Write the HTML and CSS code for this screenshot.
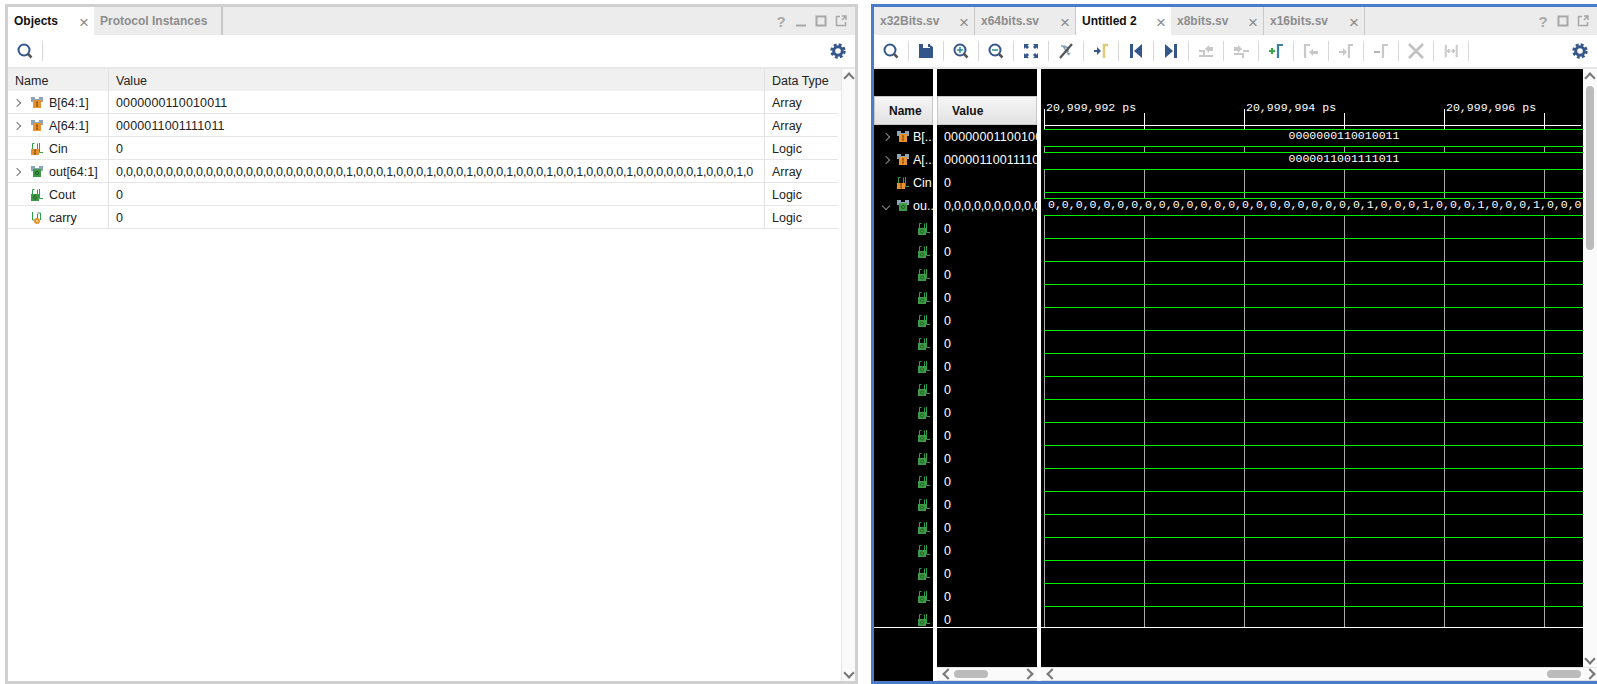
FILE: index.html
```html
<!DOCTYPE html>
<html>
<head>
<meta http-equiv="Content-Type" content="text/html; charset=utf-8"/>
<title>Simulation</title>
<link rel="stylesheet" href="styles.css">
</head>
<body>

<svg class="defs" width="0" height="0">
  <symbol id="arr-in" viewBox="0 0 14 12">
    <path d="M1 0h4v2h4V0h4v5h-2v5H3V5H1z" fill="#8ea5b8"/>
    <rect x="3" y="3" width="8" height="8" fill="#e8912d"/>
    <path d="M6 5h2M7 5v4M6 9h2" stroke="#7a4a14" fill="none"/>
  </symbol>
  <symbol id="arr-out" viewBox="0 0 14 12">
    <path d="M1 0h4v2h4V0h4v5h-2v5H3V5H1z" fill="#8ea5b8"/>
    <rect x="3" y="3" width="8" height="8" fill="#3f9a48"/>
    <circle cx="7" cy="7" r="1.6" fill="none" stroke="#1f5e25"/>
  </symbol>
  <symbol id="sig-in" viewBox="0 0 14 12">
    <path d="M2.500 6V.5H4.500M7.500.5V6M9.500 0v9.500H13" stroke="#2fa04a" fill="none"/>
    <rect x="1" y="6" width="8" height="6" fill="#e8912d"/>
    <path d="M4 7h2M5 7v4M4 11h2" stroke="#7a4a14" fill="none"/>
  </symbol>
  <symbol id="sig-out" viewBox="0 0 14 12">
    <path d="M2.500 6V.5H4.500M7.500.5V6M9.500 0v9.500H13" stroke="#2fa04a" fill="none"/>
    <rect x="1" y="5" width="8" height="7" fill="#3f9a48"/>
    <circle cx="5" cy="8.500" r="1.600" fill="none" stroke="#1f5e25"/>
  </symbol>
  <symbol id="sig-int" viewBox="0 0 14 12">
    <path d="M2.500 0v8H5M7.500 8V2M7.500 1h3v7" stroke="#2fa04a" fill="none"/>
    <circle cx="7" cy="9" r="3" fill="#e8912d"/>
    <circle cx="7" cy="9" r="1" fill="#f8e0b0"/>
  </symbol>
  <symbol id="search" viewBox="0 0 20 20">
    <circle cx="9" cy="9" r="5.500" fill="none" stroke="#34568b" stroke-width="2"/>
    <path d="M13 13l3.500 3.500" stroke="#555" stroke-width="2.500"/>
  </symbol>
  <symbol id="gear" viewBox="0 0 20 20">
    <circle cx="10" cy="10" r="6.500" fill="none" stroke="#34568b" stroke-width="2.400" stroke-dasharray="2.900 2.200"/>
    <circle cx="10" cy="10" r="4.300" fill="none" stroke="#34568b" stroke-width="3"/>
  </symbol>
</svg>

<div class="page">

  <section class="panel panel-left">
    <div class="tabbar">
      <div class="tab tab-active tab-objects"><span>Objects</span><i class="x">&#215;</i></div>
      <div class="tab tab-protocol"><span>Protocol Instances</span></div>
      <div class="tabbar-fill"></div>
      <div class="win-btns">
        <span class="win-q">?</span>
        <svg width="12" height="12"><path d="M1 10.500h10" stroke="#a8a8a8" stroke-width="2"/></svg>
        <svg width="12" height="12"><rect x="1.500" y="1.500" width="9" height="9" fill="none" stroke="#a8a8a8" stroke-width="2"/></svg>
        <svg width="12" height="12"><path d="M5 1.500H1.500v9h9V7M7 1h4v4M11 1L7 5" fill="none" stroke="#a8a8a8" stroke-width="1.500"/></svg>
      </div>
    </div>
    <div class="toolbar">
      <div class="tool"><svg width="20" height="20"><use href="#search"/></svg></div>
      <div class="toolbar-fill"></div>
      <div class="tool-gear"><svg width="20" height="20"><use href="#gear"/></svg></div>
    </div>
    <div class="objects">
      <div class="objects-table">
        <div class="orow ohead"><div class="c-name">Name</div><div class="c-value">Value</div><div class="c-type">Data Type</div></div>
        <div class="orow">
          <div class="c-name"><i class="chev"></i><svg class="sig" width="14" height="12"><use href="#arr-in"/></svg>B[64:1]</div>
          <div class="c-value digits">0000000110010011</div><div class="c-type">Array</div>
        </div>
        <div class="orow">
          <div class="c-name"><i class="chev"></i><svg class="sig" width="14" height="12"><use href="#arr-in"/></svg>A[64:1]</div>
          <div class="c-value digits">0000011001111011</div><div class="c-type">Array</div>
        </div>
        <div class="orow">
          <div class="c-name"><i class="chev chev-none"></i><svg class="sig" width="14" height="12"><use href="#sig-in"/></svg>Cin</div>
          <div class="c-value">0</div><div class="c-type">Logic</div>
        </div>
        <div class="orow">
          <div class="c-name"><i class="chev"></i><svg class="sig" width="14" height="12"><use href="#arr-out"/></svg>out[64:1]</div>
          <div class="c-value bits">0,0,0,0,0,0,0,0,0,0,0,0,0,0,0,0,0,0,0,0,0,0,0,1,0,0,0,1,0,0,0,1,0,0,0,1,0,0,0,1,0,0,0,1,0,0,1,0,0,0,0,1,0,0,0,0,0,0,1,0,0,0,1,0</div><div class="c-type">Array</div>
        </div>
        <div class="orow">
          <div class="c-name"><i class="chev chev-none"></i><svg class="sig" width="14" height="12"><use href="#sig-out"/></svg>Cout</div>
          <div class="c-value">0</div><div class="c-type">Logic</div>
        </div>
        <div class="orow">
          <div class="c-name"><i class="chev chev-none"></i><svg class="sig" width="14" height="12"><use href="#sig-int"/></svg>carry</div>
          <div class="c-value">0</div><div class="c-type">Logic</div>
        </div>
      </div>
      <div class="vscroll vscroll-left">
        <i class="arrow arrow-up"></i>
        <i class="arrow arrow-down"></i>
      </div>
    </div>
  </section>

  <section class="panel panel-right">
    <div class="tabbar">
      <div class="tab tab-file w100"><span>x32Bits.sv</span><i class="x">&#215;</i></div>
      <div class="tab tab-file w100"><span>x64bits.sv</span><i class="x">&#215;</i></div>
      <div class="tab tab-active w95"><span>Untitled 2</span><i class="x">&#215;</i></div>
      <div class="tab tab-file w93"><span>x8bits.sv</span><i class="x">&#215;</i></div>
      <div class="tab tab-file w100"><span>x16bits.sv</span><i class="x">&#215;</i></div>
      <div class="tabbar-fill"></div>
      <div class="win-btns">
        <span class="win-q">?</span>
        <svg width="12" height="12"><rect x="1.500" y="1.500" width="9" height="9" fill="none" stroke="#a8a8a8" stroke-width="2"/></svg>
        <svg width="12" height="12"><path d="M5 1.500H1.500v9h9V7M7 1h4v4M11 1L7 5" fill="none" stroke="#a8a8a8" stroke-width="1.500"/></svg>
      </div>
    </div>
    <div class="toolbar toolbar-wave">
      <div class="tool"><svg width="20" height="20"><use href="#search"/></svg></div>
      <div class="tool"><svg width="20" height="20"><path d="M3 3h11v3h-2V3H7v4h7V4l3 2v11H3z" fill="#34568b"/></svg></div>
      <div class="tool"><svg width="20" height="20"><use href="#search"/><path d="M6 9h6M9 6v6" stroke="#2a8a96" stroke-width="1.500"/></svg></div>
      <div class="tool"><svg width="20" height="20"><use href="#search"/><path d="M6 9h6" stroke="#2a8a96" stroke-width="1.500"/></svg></div>
      <div class="tool"><svg width="20" height="20"><path d="M3 3h5L6.500 4.500 8 6 6 8 4.500 6.500 3 8zM17 3v5l-1.500-1.500L14 8l-2-2 1.500-1.500L12 3zM3 17v-5l1.500 1.500L6 12l2 2-1.500 1.500L8 17zM17 17h-5l1.500-1.500L12 14l2-2 1.500 1.500L17 12z" fill="#34568b"/></svg></div>
      <div class="tool"><svg width="20" height="20"><path d="M5 5h2l6 9M8 5l4 2v4M12 14l2-2" fill="none" stroke="#7f9bb5" stroke-width="1.500"/><path d="M4 17L16 3" stroke="#555" stroke-width="2.200"/></svg></div>
      <div class="tool"><svg width="20" height="20"><path d="M3 9h3V6l4 4-4 4v-3H3z" fill="#34568b"/><path d="M13 17V4h4" fill="none" stroke="#e3c878" stroke-width="2.600"/></svg></div>
      <div class="tool"><svg width="20" height="20"><path d="M4 3h3v14H4zM16 3v14L8 10z" fill="#34568b"/></svg></div>
      <div class="tool"><svg width="20" height="20"><path d="M16 3h-3v14h3zM4 3v14l8-7z" fill="#34568b"/></svg></div>
      <div class="tool"><svg width="20" height="20"><path d="M3 10h5v5h9M3 15h5" fill="none" stroke="#c8c8c8" stroke-width="2"/><path d="M9 8l4-4v2h4v4h-4v2z" fill="#c8c8c8"/></svg></div>
      <div class="tool"><svg width="20" height="20"><path d="M3 13h9v4M12 10h6" fill="none" stroke="#c8c8c8" stroke-width="2"/><path d="M11 8L7 4v2H3v4h4v2z" fill="#c8c8c8"/></svg></div>
      <div class="tool"><svg width="20" height="20"><path d="M3 10h6M6 7v6" stroke="#35a845" stroke-width="2.200"/><path d="M12 17V4h5" fill="none" stroke="#3b7fae" stroke-width="2.200"/></svg></div>
      <div class="tool"><svg width="20" height="20"><path d="M4 17V4h5" fill="none" stroke="#c8c8c8" stroke-width="2.200"/><path d="M8 11l4-3v2h5v3h-5v2z" fill="#c8c8c8"/></svg></div>
      <div class="tool"><svg width="20" height="20"><path d="M3 10h4V7l4 4-4 4v-3H3z" fill="#c8c8c8"/><path d="M13 17V4h4" fill="none" stroke="#c8c8c8" stroke-width="2.200"/></svg></div>
      <div class="tool"><svg width="20" height="20"><path d="M3 11h6" stroke="#b4b4b4" stroke-width="2"/><path d="M12 17V4h5" fill="none" stroke="#c8c8c8" stroke-width="2.200"/></svg></div>
      <div class="tool"><svg width="20" height="20"><path d="M3 3l14 14M17 3L3 17" stroke="#c0c0c0" stroke-width="2.600"/></svg></div>
      <div class="tool"><svg width="20" height="20"><path d="M4 4v12h1.500V4zM15 4v12h1.500V4z" fill="#d4d4d4" stroke="#c8c8c8" stroke-width=".6"/><path d="M6 10h8M6 10l2-2v4zM14 10l-2-2v4z" fill="#c4c4c4" stroke="#c4c4c4"/></svg></div>
      <div class="toolbar-fill"></div>
      <div class="tool-gear"><svg width="20" height="20"><use href="#gear"/></svg></div>
    </div>

    <div class="sim">
      <div class="sim-col col-names">
        <div class="sim-head">Name</div>
        <div class="sim-rows">
          <div class="srow"><i class="chev chev-dark"></i><svg class="sig" width="14" height="12"><use href="#arr-in"/></svg><span>B[...]</span></div>
          <div class="srow"><i class="chev chev-dark"></i><svg class="sig" width="14" height="12"><use href="#arr-in"/></svg><span>A[...]</span></div>
          <div class="srow"><i class="chev chev-none"></i><svg class="sig" width="14" height="12"><use href="#sig-in"/></svg><span>Cin</span></div>
          <div class="srow"><i class="chev chev-dark chev-open"></i><svg class="sig" width="14" height="12"><use href="#arr-out"/></svg><span>ou...</span></div>
          <div class="srow srow-bit"><svg class="sig" width="14" height="12"><use href="#sig-out"/></svg></div>
          <div class="srow srow-bit"><svg class="sig" width="14" height="12"><use href="#sig-out"/></svg></div>
          <div class="srow srow-bit"><svg class="sig" width="14" height="12"><use href="#sig-out"/></svg></div>
          <div class="srow srow-bit"><svg class="sig" width="14" height="12"><use href="#sig-out"/></svg></div>
          <div class="srow srow-bit"><svg class="sig" width="14" height="12"><use href="#sig-out"/></svg></div>
          <div class="srow srow-bit"><svg class="sig" width="14" height="12"><use href="#sig-out"/></svg></div>
          <div class="srow srow-bit"><svg class="sig" width="14" height="12"><use href="#sig-out"/></svg></div>
          <div class="srow srow-bit"><svg class="sig" width="14" height="12"><use href="#sig-out"/></svg></div>
          <div class="srow srow-bit"><svg class="sig" width="14" height="12"><use href="#sig-out"/></svg></div>
          <div class="srow srow-bit"><svg class="sig" width="14" height="12"><use href="#sig-out"/></svg></div>
          <div class="srow srow-bit"><svg class="sig" width="14" height="12"><use href="#sig-out"/></svg></div>
          <div class="srow srow-bit"><svg class="sig" width="14" height="12"><use href="#sig-out"/></svg></div>
          <div class="srow srow-bit"><svg class="sig" width="14" height="12"><use href="#sig-out"/></svg></div>
          <div class="srow srow-bit"><svg class="sig" width="14" height="12"><use href="#sig-out"/></svg></div>
          <div class="srow srow-bit"><svg class="sig" width="14" height="12"><use href="#sig-out"/></svg></div>
          <div class="srow srow-bit"><svg class="sig" width="14" height="12"><use href="#sig-out"/></svg></div>
          <div class="srow srow-bit"><svg class="sig" width="14" height="12"><use href="#sig-out"/></svg></div>
          <div class="srow srow-bit"><svg class="sig" width="14" height="12"><use href="#sig-out"/></svg></div>
        </div>
      </div>

      <div class="sim-col col-values">
        <div class="sim-head">Value</div>
        <div class="sim-rows">
          <div class="srow digits">0000000110010011</div>
          <div class="srow digits">0000011001111011</div>
          <div class="srow">0</div>
          <div class="srow bits">0,0,0,0,0,0,0,0,0,0,0,0,0,0,0,0,0,0,0,0,0,0,0,1,0,0,0,1,0,0,0,1,0,0,0,1,0,0,0,1,0,0,0,1,0,0,1,0,0,0,0,1,0,0,0,0,0,0,1,0,0,0,1,0</div>
          <div class="srow">0</div><div class="srow">0</div><div class="srow">0</div><div class="srow">0</div><div class="srow">0</div><div class="srow">0</div>
          <div class="srow">0</div><div class="srow">0</div><div class="srow">0</div><div class="srow">0</div><div class="srow">0</div><div class="srow">0</div>
          <div class="srow">0</div><div class="srow">0</div><div class="srow">0</div><div class="srow">0</div><div class="srow">0</div><div class="srow">0</div>
        </div>
        <div class="hscroll">
          <i class="arrow arrow-left"></i>
          <b class="thumb"></b>
          <i class="arrow arrow-right"></i>
        </div>
      </div>

      <div class="sim-col col-wave">
        <div class="wave-top">
          <div class="wave-main">
            <div class="ruler">
              <div class="tick major"><span>20,999,992 ps</span></div>
              <div class="tick"></div>
              <div class="tick major"><span>20,999,994 ps</span></div>
              <div class="tick"></div>
              <div class="tick major"><span>20,999,996 ps</span></div>
              <div class="tick"></div>
            </div>
            <div class="wave-rows">
              <div class="wrow"><div class="bus bus-center">0000000110010011</div></div>
              <div class="wrow"><div class="bus bus-center">0000011001111011</div></div>
              <div class="wrow"><div class="low"></div></div>
              <div class="wrow"><div class="bus">0,0,0,0,0,0,0,0,0,0,0,0,0,0,0,0,0,0,0,0,0,0,0,1,0,0,0,1,0,0,0,1,0,0,0,1,0,0,0,1,0,0,0,1,0,0,1,0,0,0,0,1,0,0,0,0,0,0,1,0,0,0,1,0</div></div>
              <div class="wrow"><div class="low"></div></div><div class="wrow"><div class="low"></div></div><div class="wrow"><div class="low"></div></div>
              <div class="wrow"><div class="low"></div></div><div class="wrow"><div class="low"></div></div><div class="wrow"><div class="low"></div></div>
              <div class="wrow"><div class="low"></div></div><div class="wrow"><div class="low"></div></div><div class="wrow"><div class="low"></div></div>
              <div class="wrow"><div class="low"></div></div><div class="wrow"><div class="low"></div></div><div class="wrow"><div class="low"></div></div>
              <div class="wrow"><div class="low"></div></div><div class="wrow"><div class="low"></div></div><div class="wrow"><div class="low"></div></div>
              <div class="wrow"><div class="low"></div></div><div class="wrow"><div class="low"></div></div><div class="wrow"><div class="low"></div></div>
            </div>
          </div>
          <div class="vscroll vscroll-right">
            <i class="arrow arrow-up"></i>
            <b class="thumb-v"></b>
            <i class="arrow arrow-down"></i>
          </div>
        </div>
        <div class="hscroll hscroll-wave">
          <i class="arrow arrow-left"></i>
          <b class="thumb"></b>
          <i class="arrow arrow-right"></i>
        </div>
      </div>
    </div>
  </section>

</div>
</body>
</html>
```

FILE: styles.css
```css
* {
  box-sizing: border-box;
}

html, body {
  margin: 0;
  height: 100%;
  background-color: white;
  overflow: hidden;
}

body {
  font-family: "Liberation Sans", Arial, sans-serif;
  font-size: 12.5px;
  color: #222;
}

.defs {
  display: block;
  height: 0;
}

.page {
  display: flex;
  height: 684px;
  padding: 4px 0 0 5px;
  gap: 13px;
}

.panel {
  display: flex;
  flex-direction: column;
  height: 680px;
  border: 3px solid #d0d0d0;
}

.panel-left {
  width: 853px;
  flex: none;
}

.panel-right {
  flex: 1;
  min-width: 0;
  overflow: hidden;
  border-color: #4a7cc9;
  border-right: none;
}

/* tabs */
.tabbar {
  display: flex;
  height: 28px;
  flex: none;
  background-color: #ececec;
}

.tab {
  display: flex;
  align-items: center;
  height: 28px;
  padding: 0 6px;
  color: #8c8c8c;
  font-size: 12px;
  font-weight: bold;
  border-right: 1px solid #c8c8c8;
}

.tab span {
  flex: 1;
}

.tab-active {
  background-color: white;
  color: #111;
  border-right: none;
}

.tab-objects {
  width: 86px;
}

.tab-protocol {
  width: 129px;
  border-right: 2px solid #c8c8c8;
}

.w100 {
  width: 101px;
}

.w95 {
  width: 95px;
}

.w93 {
  width: 93px;
}

.x {
  font-style: normal;
  font-weight: normal;
  font-size: 17px;
  line-height: 17px;
  color: #8a8a8a;
  margin-right: -1px;
  margin-top: 3px;
}

.tabbar-fill, .toolbar-fill {
  flex: 1;
}

.win-btns {
  display: flex;
  align-items: center;
  gap: 8px;
  padding-right: 8px;
}

.win-q {
  color: #a8a8a8;
  font-weight: bold;
  font-size: 15px;
  width: 12px;
  text-align: center;
}

/* toolbars */
.toolbar {
  display: flex;
  align-items: center;
  height: 34px;
  flex: none;
  background-color: white;
  border-bottom: 2px solid #e8e8e8;
}

.tool {
  display: flex;
  align-items: center;
  justify-content: center;
  width: 35px;
  height: 20px;
  border-right: 1px solid #d8d8d8;
}

.tool-gear {
  padding-right: 7px;
  height: 20px;
}

/* objects table */
.objects {
  flex: 1;
  display: flex;
  min-height: 0;
}

.objects-table {
  width: 833px;
  flex: none;
}

.orow {
  display: flex;
  align-items: center;
  height: 23px;
  width: 830px;
  border-bottom: 1px solid #e6e6e6;
}

.ohead {
  width: 833px;
  height: 22px;
  background-color: #f0f0f0;
  border-bottom: none;
}

.c-name {
  display: flex;
  align-items: center;
  width: 101px;
  height: 100%;
  padding: 1px 0 0 7px;
  border-right: 1px solid #e2e2e2;
  flex: none;
}

.c-value {
  width: 656px;
  height: 100%;
  display: flex;
  align-items: center;
  padding: 1px 0 0 7px;
  border-right: 1px solid #e2e2e2;
  flex: none;
  white-space: nowrap;
  overflow: hidden;
}

.digits {
  letter-spacing: 0.13px;
}

.bits {
  letter-spacing: -0.21px;
}

.c-type {
  padding: 2px 0 0 7px;
}

.chev {
  display: block;
  width: 6px;
  height: 6px;
  border-top: 1.500px solid #777;
  border-right: 1.500px solid #777;
  transform: rotate(45deg);
  flex: none;
}

.chev-none {
  visibility: hidden;
}

.chev-open {
  transform: rotate(135deg);
}

.sig {
  flex: none;
  margin-right: 3px;
}

.c-name .chev {
  margin: 0 10px 0 -1px;
}

.c-name .sig {
  margin-right: 5px;
}

/* scrollbars */
.vscroll {
  display: flex;
  flex-direction: column;
  align-items: center;
  justify-content: space-between;
  background-color: #fafafa;
}

.vscroll-left {
  width: 14px;
  flex: none;
  border-left: 1px solid #e6e6e6;
  padding: 3px 0 2px;
}

.vscroll-right {
  width: 14px;
  flex: none;
  padding: 3px 0 2px;
}

.arrow {
  display: block;
  width: 8px;
  height: 8px;
  flex: none;
  border-top: 2.500px solid #777;
  border-left: 2.500px solid #777;
}

.arrow-up {
  transform: rotate(45deg);
  margin-top: 2px;
}

.arrow-down {
  transform: rotate(225deg);
  margin-bottom: 2px;
}

.arrow-left {
  transform: rotate(-45deg);
}

.arrow-right {
  transform: rotate(135deg);
}

.thumb-v {
  display: block;
  width: 8px;
  height: 164px;
  border-radius: 4px;
  background-color: #bbb;
  margin-top: 4px;
  margin-bottom: auto;
}

.hscroll {
  display: flex;
  align-items: center;
  height: 14px;
  background-color: #fafafa;
  border-top: 1px solid #e6e6e6;
  border-bottom: 1px solid #e0e0e0;
  padding: 0 5px 0 7px;
  margin-top: 39px;
}

.thumb {
  display: block;
  width: 34px;
  height: 8px;
  border-radius: 4px;
  background-color: #bbb;
  margin-left: 2px;
  margin-right: auto;
}

.hscroll-wave {
  margin-top: 0;
  padding-right: 3px;
}

.hscroll-wave .thumb {
  margin-left: auto;
  margin-right: 5px;
}

/* simulation area */
.sim {
  flex: 1;
  display: flex;
  gap: 4px;
  min-height: 0;
  min-width: 0;
  background-color: white;
}

.sim-col {
  background-color: black;
  overflow: hidden;
  height: 612px;
}

.col-names {
  width: 59px;
  flex: none;
}

.col-values {
  width: 100px;
  flex: none;
}

.col-wave {
  flex: 1;
  min-width: 0;
}

.sim-head {
  height: 29px;
  margin-top: 27px;
  display: flex;
  align-items: center;
  padding-left: 14px;
  font-size: 12px;
  font-weight: bold;
  color: #111;
  background: linear-gradient(#f6f6f6, #e2e2e2);
  border: 1px solid #c8c8c8;
}

.sim-rows {
  height: 503px;
  border-bottom: 1px solid white;
  overflow: hidden;
}

.srow {
  display: flex;
  align-items: center;
  height: 23px;
  color: white;
  white-space: nowrap;
  padding-left: 7px;
}

.col-names .srow {
  padding-left: 9px;
}

.col-names .srow-bit {
  padding-left: 43px;
}

.srow .chev {
  margin: 0 7px 0 0;
}

.chev-dark {
  border-color: #888;
}

/* waveform */
.wave-top {
  display: flex;
  height: 598px;
}

.wave-main {
  flex: 1;
  min-width: 0;
  overflow: hidden;
}

.ruler {
  display: flex;
  height: 33px;
  margin: 27px 2px 0 3px;
  font-family: "Liberation Mono", "Courier New", monospace;
  font-size: 11.550px;
  color: white;
  background: linear-gradient(white, white) 0 29px / 100% 1px no-repeat;
}

.tick {
  width: 100px;
  flex: none;
  margin-top: 17px;
  border-left: 1px solid white;
}

.tick.major {
  margin-top: 13px;
}

.tick span {
  display: block;
  margin-top: -7px;
  padding-left: 1px;
  line-height: 12px;
  white-space: nowrap;
}

.wave-rows {
  height: 499px;
  overflow: hidden;
  border-bottom: 1px solid white;
  padding-left: 3px;
  background-color: black;
  background-image: repeating-linear-gradient(to right, #aaa 0, #aaa 1px, transparent 1px, transparent 100px);
  background-position: 3px 0;
  background-origin: border-box;
  font-family: "Liberation Mono", "Courier New", monospace;
  font-size: 11.550px;
  color: white;
}

.wrow {
  height: 23px;
}

.bus {
  height: 18px;
  width: 1200px;
  padding-left: 4px;
  line-height: 12px;
  white-space: nowrap;
  background-color: black;
  border-top: 1px solid #00f000;
  border-bottom: 1px solid #00f000;
}

.bus-center {
  width: 600px;
  padding-left: 0;
  text-align: center;
}

.low {
  height: 18px;
  border-bottom: 1px solid #00f000;
}
```
